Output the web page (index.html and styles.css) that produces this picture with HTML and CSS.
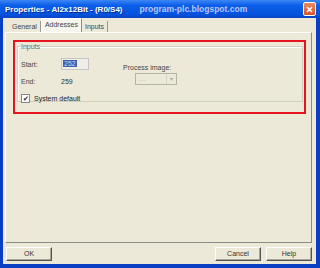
FILE: index.html
```html
<!DOCTYPE html>
<html lang="en">
  <head>
    <meta charset="UTF-8" />
    <title>Properties - AI2x12Bit - (R0/S4)</title>
    <link rel="stylesheet" href="styles.css">
  </head>
  <body>
    <div class="window">
      <div class="titlebar">
        <span class="title">Properties - AI2x12Bit - (R0/S4)</span>
        <span class="blog">program-plc.blogspot.com</span>
        <span class="close">
          <svg width="11" height="11" viewBox="0 0 11 11">
            <path d="M3 3 L8 8 M8 3 L3 8" stroke="#fff" stroke-width="1.6" />
          </svg>
        </span>
      </div>

      <div class="client">
        <div class="tabs">
          <span class="tab">General</span>
          <span class="tab active">Addresses</span>
          <span class="tab">Inputs</span>
        </div>

        <div class="panel">
          <div class="mark">
            <fieldset class="group">
              <legend>Inputs</legend>
              <div class="cols">
                <div class="left">
                  <div class="row">
                    <span class="lbl">Start:</span>
                    <span class="field"><span class="sel">252</span></span>
                  </div>
                  <div class="row">
                    <span class="lbl">End:</span>
                    <span class="val">259</span>
                  </div>
                  <div class="row check">
                    <span class="box">&#10004;</span>
                    <span>System default</span>
                  </div>
                </div>
                <div class="right">
                  <span class="lbl">Process image:</span>
                  <span class="combo">
                    <span class="combo-text">---</span>
                    <span class="arrow">&#9662;</span>
                  </span>
                </div>
              </div>
            </fieldset>
          </div>
        </div>

        <div class="buttons">
          <button class="btn">OK</button>
          <span class="spacer"></span>
          <button class="btn">Cancel</button>
          <button class="btn">Help</button>
        </div>
      </div>
    </div>
  </body>
</html>
```

FILE: styles.css
```css
body {
  margin: 0;
  background-color: #fff;
  font-family: "Liberation Sans", Arial, sans-serif;
}
.window {
  width: 320px;
  height: 268px;
  box-sizing: border-box;
  display: flex;
  flex-direction: column;
  background-color: #0a3fc4;
  padding: 0 4px 4px 3px;
}
.titlebar {
  height: 18px;
  margin: 0 -4px 0 -3px;
  padding: 0 4px 0 5px;
  display: flex;
  align-items: center;
  white-space: nowrap;
  background: linear-gradient(#3d86f5, #0a5ee8 30%, #0552df 80%, #0a44c4);
}
.title {
  color: #fff;
  font-weight: bold;
  font-size: 8px;
  text-shadow: 1px 1px 0 #0a2a8a;
}
.blog {
  color: #b9c6ff;
  font-weight: bold;
  font-size: 8.5px;
  margin-left: 17px;
}
.close {
  margin-left: auto;
  width: 11px;
  height: 12px;
  border: 1px solid #fff;
  border-radius: 2px;
  background: linear-gradient(#e88a5e, #d9532c);
  display: flex;
  align-items: center;
  justify-content: center;
}
.client {
  flex: 1;
  background-color: #ece9d8;
  display: flex;
  flex-direction: column;
  padding: 0 4px 0 2px;
  font-size: 7px;
  color: #222;
}
.tabs {
  height: 14px;
  display: flex;
  align-items: flex-end;
  padding-left: 4px;
}
.tab {
  height: 11px;
  line-height: 11px;
  padding: 0 3px;
  color: #444;
  border-right: 1px solid #999;
}
.tab.active {
  height: 13px;
  line-height: 12px;
  background-color: #f6f5ee;
  border-top: 1px solid #fff;
  border-left: 1px solid #fff;
  border-right: 1px solid #8d8c84;
}
.panel {
  flex: 1;
  border: 1px solid #fff;
  border-right-color: #8d8c84;
  border-bottom-color: #8d8c84;
  padding: 7px 5px 0 7px;
}
.mark {
  border: 2px solid #e5141e;
  height: 69px;
  padding: 1px 1px 0 2px;
}
.group {
  margin: 0;
  border: 1px solid #d0d0bf;
  box-shadow: inset 1px 1px 0 #fff;
  padding: 2px 3px 0 3px;
  height: 55px;
}
.group legend {
  padding: 0;
  color: #666;
}
.cols {
  display: flex;
  gap: 34px;
}
.left {
  display: flex;
  flex-direction: column;
  gap: 5px;
  padding-top: 6px;
}
.row {
  display: flex;
  align-items: center;
  height: 12px;
}
.lbl {
  width: 40px;
  color: #444;
}
.field {
  width: 28px;
  height: 12px;
  border: 1px solid #c5c5c5;
  background-color: #eeede6;
  padding: 1px 0 0 1px;
  box-sizing: border-box;
}
.sel {
  background-color: #3f5fa8;
  color: #cbd6f0;
  padding: 0 1px;
}
.val {
  color: #333;
}
.check {
  gap: 4px;
}
.box {
  width: 7px;
  height: 7px;
  border: 1px solid #888;
  background-color: #fff;
  font-size: 7px;
  line-height: 7px;
  text-align: center;
  color: #222;
}
.right {
  display: flex;
  flex-direction: column;
  padding-top: 12px;
  gap: 2px;
}
.right .lbl {
  width: auto;
}
.combo {
  margin-left: 12px;
  width: 42px;
  height: 12px;
  box-sizing: border-box;
  border: 1px solid #b4b4a8;
  display: flex;
  align-items: center;
  justify-content: space-between;
  color: #cfcdc2;
  padding-left: 3px;
}
.arrow {
  width: 9px;
  height: 10px;
  border-left: 1px solid #d4d2c6;
  font-size: 6px;
  text-align: center;
  line-height: 10px;
  color: #aaa;
}
.buttons {
  height: 21px;
  display: flex;
  align-items: center;
  gap: 5px;
  padding: 0 0 0 1px;
}
.spacer {
  flex: 1;
}
.btn {
  -webkit-appearance: none;
  width: 46px;
  height: 14px;
  font-family: "Liberation Sans", Arial, sans-serif;
  font-size: 7px;
  color: #333;
  padding: 0;
  background-color: #ece9d8;
  border: 1px solid #fff;
  border-right-color: #555;
  border-bottom-color: #555;
  box-shadow: inset -1px -1px 0 #a8a598;
}
```
